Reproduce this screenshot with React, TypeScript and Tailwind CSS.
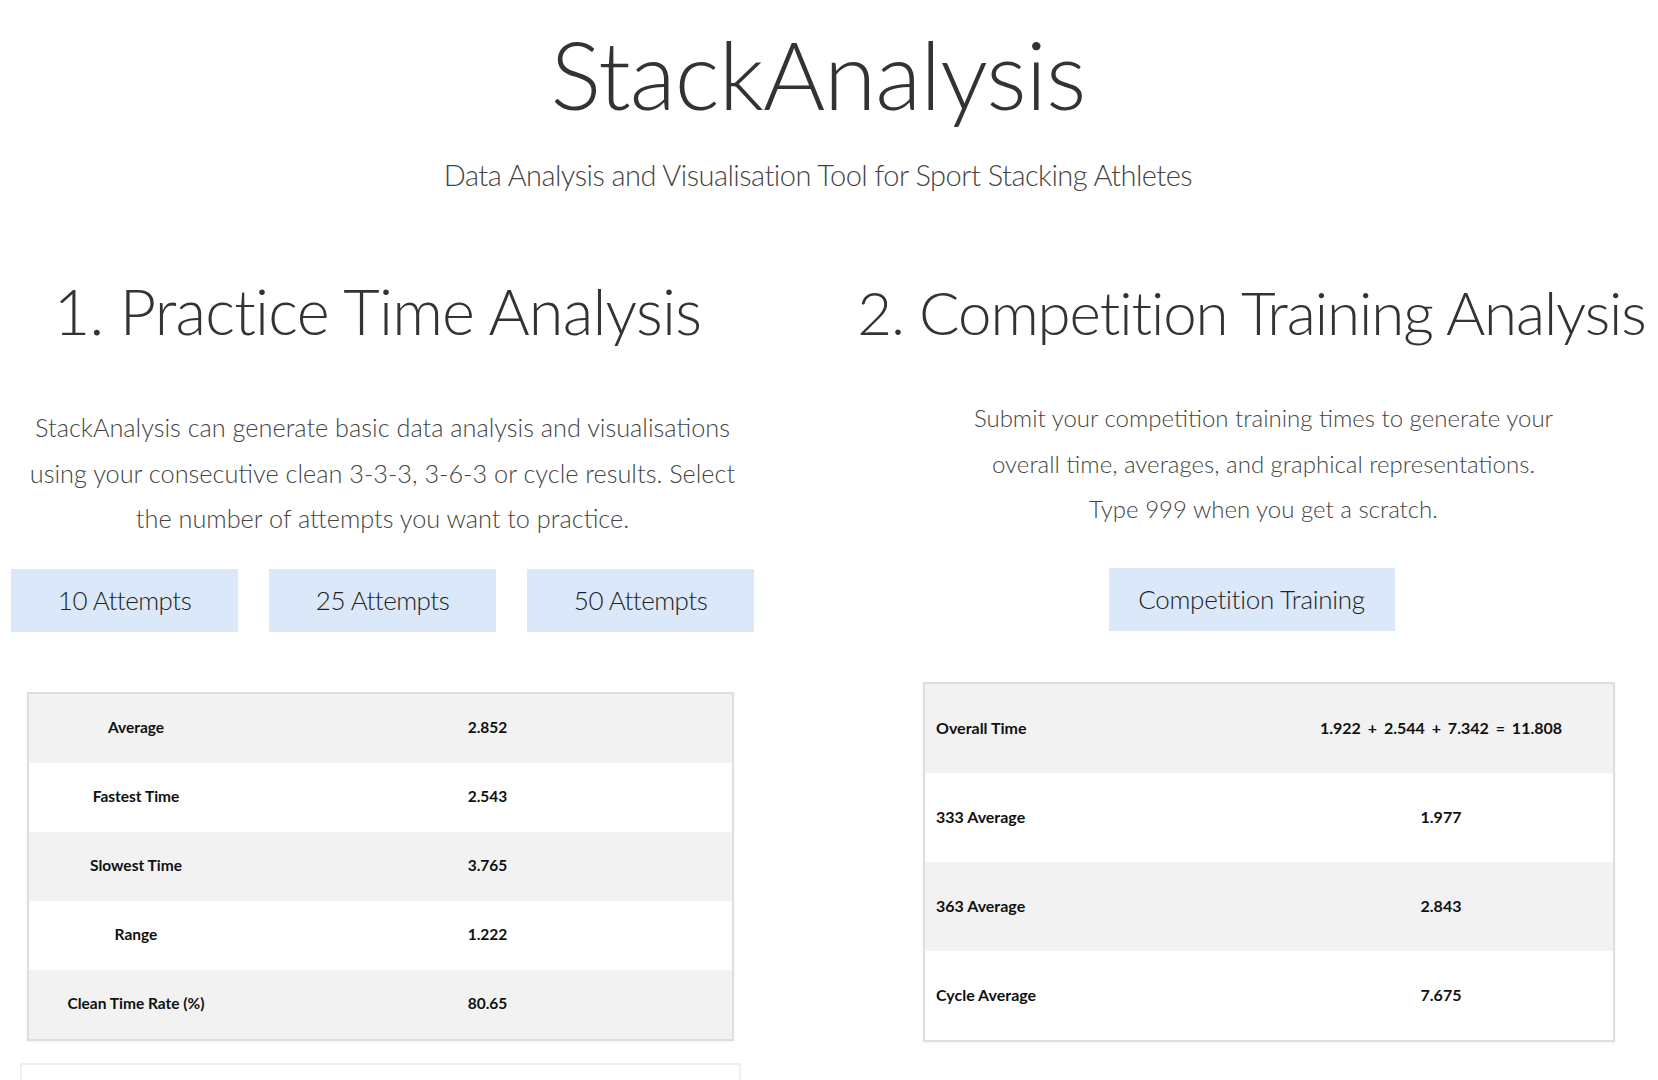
import React from "react";

const practiceRows: [string, string][] = [
  ["Average", "2.852"],
  ["Fastest Time", "2.543"],
  ["Slowest Time", "3.765"],
  ["Range", "1.222"],
  ["Clean Time Rate (%)", "80.65"],
];

const compRows: [string, string][] = [
  ["Overall Time", "1.922 + 2.544 + 7.342 = 11.808"],
  ["333 Average", "1.977"],
  ["363 Average", "2.843"],
  ["Cycle Average", "7.675"],
];

export default function App() {
  return (
    <div className="min-h-screen w-full bg-white text-[#333] font-['Lato','Open_Sans',sans-serif] overflow-hidden">
      <header className="flex flex-col items-center pr-[22px]">
        <h1 className="mt-[26px] text-[95px] leading-none font-light tracking-[-0.01em] text-[#333]">
          StackAnalysis
        </h1>
        <p className="mt-[39px] text-[29px] leading-none font-light tracking-[-0.018em] text-[#444]">
          Data Analysis and Visualisation Tool for Sport Stacking Athletes
        </p>
      </header>

      <main className="mt-[90px] flex">
        {/* Left column */}
        <section className="w-[765px] shrink-0 flex flex-col">
          <div className="flex justify-center pr-[10px]">
            <h2 className="whitespace-nowrap text-[63px] leading-none font-light tracking-[-0.012em] text-[#333]">
              1. Practice Time Analysis
            </h2>
          </div>
          <p className="mt-[63px] text-center text-[25.3px] leading-[45.5px] font-light text-[#444]">
            StackAnalysis can generate basic data analysis and visualisations
            <br />
            using your consecutive clean 3-3-3, 3-6-3 or cycle results. Select
            <br />
            the number of attempts you want to practice.
          </p>
          <div className="mt-[27px] ml-[11px] flex gap-[31px]">
            {["10 Attempts", "25 Attempts", "50 Attempts"].map((t) => (
              <button
                key={t}
                className="w-[227px] h-[63px] bg-[#dbe8fa] text-[26px] tracking-[-0.02em] font-light text-[#222] flex items-center justify-center"
              >
                {t}
              </button>
            ))}
          </div>
          <div className="mt-[60px] ml-[27px] w-[707px] border-2 border-[#dedede] shadow-[0_1px_2px_rgba(0,0,0,0.06)]">
            {practiceRows.map(([label, value], i) => (
              <div
                key={label}
                className={`flex h-[69px] items-center text-[15.5px] font-bold text-[#111] ${
                  i % 2 === 0 ? "bg-[#f2f2f2]" : "bg-white"
                }`}
              >
                <div className="w-[214px] text-center">{label}</div>
                <div className="flex-1 text-center">{value}</div>
              </div>
            ))}
          </div>
          <div className="mt-[22px] ml-[20px] w-[721px] h-[60px] border-2 border-[#efefef]" />
        </section>

        {/* Right column */}
        <section className="ml-[80px] flex-1 min-w-0 flex flex-col">
          <div className="flex justify-center">
            <h2 className="shrink-0 whitespace-nowrap text-[60px] leading-none font-light tracking-[-0.018em] text-[#333] pt-[3px]">
              2. Competition Training Analysis
            </h2>
          </div>
          <p className="mt-[53px] pl-[24px] text-center text-[24px] leading-[45.5px] font-light text-[#444]">
            Submit your competition training times to generate your
            <br />
            overall time, averages, and graphical representations.
            <br />
            Type 999 when you get a scratch.
          </p>
          <div className="mt-[36px] flex justify-center">
            <button className="w-[286px] h-[63px] bg-[#dbe8fa] text-[26px] tracking-[-0.01em] font-light text-[#222] flex items-center justify-center">
              Competition Training
            </button>
          </div>
          <div className="mt-[51px] ml-[78px] w-[692px] border-2 border-[#dedede] shadow-[0_1px_2px_rgba(0,0,0,0.06)]">
            {compRows.map(([label, value], i) => (
              <div
                key={label}
                className={`flex h-[89px] items-center text-[16px] font-bold text-[#111] ${
                  i % 2 === 0 ? "bg-[#f2f2f2]" : "bg-white"
                }`}
              >
                <div className="w-1/2 pl-[11px]">{label}</div>
                <div className="w-1/2 text-center [word-spacing:3px]">{value}</div>
              </div>
            ))}
          </div>
        </section>
      </main>
    </div>
  );
}
